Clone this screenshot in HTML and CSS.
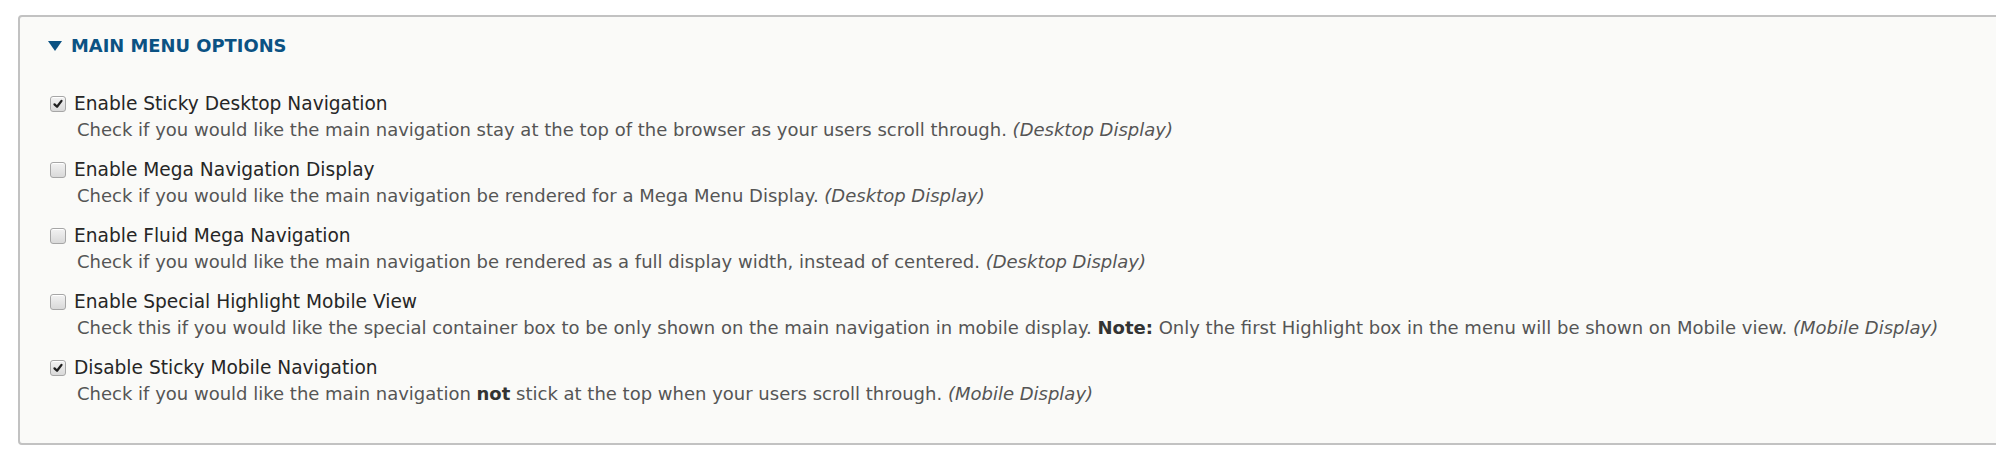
FILE: index.html
```html
<!DOCTYPE html>
<html>
<head>
<meta charset="utf-8">
<link rel="stylesheet" href="styles.css">
</head>
<body>
<fieldset class="panel">
  <div class="legend"><span class="tri"></span><span class="legend-text">MAIN MENU OPTIONS</span></div>
  <div class="items">
    <div class="item">
      <span class="box checked"><svg viewBox="0 0 16 16" width="16" height="16"><path d="M4 8.4 L6.9 11.2 L12 4.4" fill="none" stroke="#1e1e1e" stroke-width="2.6" stroke-linecap="round" stroke-linejoin="round"/></svg></span>
      <label class="label">Enable Sticky Desktop Navigation</label>
      <div class="desc">Check if you would like the main navigation stay at the top of the browser as your users scroll through. <em>(Desktop Display)</em></div>
    </div>
    <div class="item">
      <span class="box"></span>
      <label class="label">Enable Mega Navigation Display</label>
      <div class="desc">Check if you would like the main navigation be rendered for a Mega Menu Display. <em>(Desktop Display)</em></div>
    </div>
    <div class="item">
      <span class="box"></span>
      <label class="label">Enable Fluid Mega Navigation</label>
      <div class="desc">Check if you would like the main navigation be rendered as a full display width, instead of centered. <em>(Desktop Display)</em></div>
    </div>
    <div class="item">
      <span class="box"></span>
      <label class="label">Enable Special Highlight Mobile View</label>
      <div class="desc">Check this if you would like the special container box to be only shown on the main navigation in mobile display. <strong>Note:</strong> Only the first Highlight box in the menu will be shown on Mobile view. <em>(Mobile Display)</em></div>
    </div>
    <div class="item">
      <span class="box checked"><svg viewBox="0 0 16 16" width="16" height="16"><path d="M4 8.4 L6.9 11.2 L12 4.4" fill="none" stroke="#1e1e1e" stroke-width="2.6" stroke-linecap="round" stroke-linejoin="round"/></svg></span>
      <label class="label">Disable Sticky Mobile Navigation</label>
      <div class="desc">Check if you would like the main navigation <strong>not</strong> stick at the top when your users scroll through. <em>(Mobile Display)</em></div>
    </div>
  </div>
</fieldset>
</body>
</html>
```
FILE: styles.css
```css
html, body {
  margin: 0;
  padding: 0;
  background: #ffffff;
  overflow: hidden;
}
body {
  font-family: "DejaVu Sans", Verdana, sans-serif;
  color: #333;
}
.panel {
  box-sizing: border-box;
  margin: 15px 0 0 18px;
  width: 2010px;
  height: 430px;
  border: 2px solid #c2c2c2;
  border-radius: 4px;
  background: #fafaf8;
  padding: 16px 0 0 28px;
  min-width: 0;
}
.legend {
  display: flex;
  align-items: center;
  height: 24px;
  gap: 9px;
}
.tri {
  width: 0;
  height: 0;
  border-left: 7px solid transparent;
  border-right: 7px solid transparent;
  border-top: 10px solid #0b5283;
  margin-top: 1px;
}
.legend-text {
  font-weight: bold;
  font-size: 17.9px;
  color: #0b5283;
}
.items {
  margin-top: 34px;
  padding-left: 2px;
}
.item {
  display: grid;
  grid-template-columns: 24px auto;
  margin-bottom: 14px;
}
.box {
  box-sizing: border-box;
  width: 16px;
  height: 16px;
  margin-top: 5px;
  border: 1px solid #a6a6a6;
  border-radius: 3px;
  background: linear-gradient(#f2f2f2, #d9d9d9);
  box-shadow: inset 0 1px 0 #ffffff;
  display: flex;
  align-items: center;
  justify-content: center;
}
.box svg {
  display: block;
  width: 14px;
  height: 14px;
}
.label {
  font-size: 18.6px;
  line-height: 26px;
  color: #262626;
}
.desc {
  grid-column: 2;
  font-size: 18px;
  line-height: 26px;
  color: #555;
  padding-left: 3px;
}
.desc strong {
  color: #333;
}
.desc em {
  font-style: italic;
}
```
